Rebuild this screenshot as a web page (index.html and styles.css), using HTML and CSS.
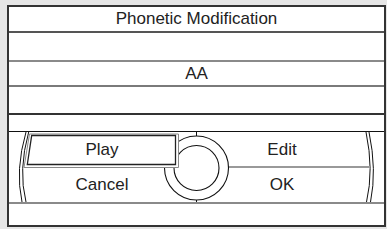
FILE: index.html
```html
<!DOCTYPE html>
<html>
<head>
<meta charset="utf-8">
<link rel="stylesheet" href="styles.css">
</head>
<body>
<div class="screen">
  <div class="row title">Phonetic Modification</div>
  <div class="row blank-a"></div>
  <div class="row value">AA</div>
  <div class="row blank-b"></div>
  <div class="row blank-c"></div>
  <div class="wheel">
    <svg class="wheel-art" width="375" height="70" viewBox="9 132 375 70">
      <path class="arc" d="M26 132 Q15 170 22 202"/>
      <path class="arc" d="M28.7 132 Q18 170 26 202"/>
      <path class="arc" d="M366 132 Q374 170 366.5 202"/>
      <path class="arc" d="M369 132 Q377 170 370.5 202"/>
      <line class="divider" x1="228" y1="167" x2="370" y2="167"/>
      <circle class="ring" cx="196.5" cy="168" r="32"/>
      <circle class="ring" cx="196.5" cy="168" r="22.5"/>
      <line class="tick" x1="196.5" y1="132" x2="196.5" y2="136"/>
      <line class="tick" x1="196.5" y1="200" x2="196.5" y2="202"/>
      <polygon class="sel-outer" points="24,167.5 29.5,134 178.5,134 178.5,167.5"/>
      <polygon class="sel-inner" points="27.3,164.5 31.7,135.5 175.5,135.5 175.5,164.5"/>
    </svg>
    <div class="opt">Play</div>
    <div class="opt">Edit</div>
    <div class="opt">Cancel</div>
    <div class="opt">OK</div>
  </div>
  <div class="row foot"></div>
</div>
</body>
</html>
```
FILE: styles.css
```css
html, body {
  margin: 0;
  padding: 0;
}
body {
  background: #e6e6e6;
  font-family: "Liberation Sans", Arial, sans-serif;
  font-size: 17px;
  color: #222;
  width: 387px;
  height: 229px;
  overflow: hidden;
}
.screen {
  margin: 5px 0 0 7px;
  width: 375px;
  border: 2px solid #333;
  background: #fff;
}
.row {
  display: flex;
  align-items: center;
  justify-content: center;
}
.title {
  height: 24px;
  border-bottom: 2px solid #555;
  padding-left: 0;
}
.blank-a {
  height: 27px;
  border-bottom: 2px solid #8a8a8a;
}
.value {
  height: 22px;
  border-bottom: 2px solid #7a7a7a;
  padding-top: 1px;
  box-sizing: content-box;
}
.blank-b {
  height: 26px;
  border-bottom: 2px solid #333;
}
.blank-c {
  height: 16px;
  border-bottom: 1px solid #111;
}
.wheel {
  position: relative;
  height: 70px;
  border-bottom: 2px solid #8a8a8a;
  display: grid;
  grid-template-columns: 186px 174px;
  grid-template-rows: 35px 35px;
}
.wheel-art {
  position: absolute;
  left: 0;
  top: 0;
  z-index: 0;
}
.arc {
  fill: none;
  stroke: #111;
  stroke-width: 1;
}
.divider {
  stroke: #999;
  stroke-width: 2;
}
.ring {
  fill: none;
  stroke: #111;
  stroke-width: 1.1;
}
.tick {
  stroke: #111;
  stroke-width: 1;
}
.sel-outer {
  fill: #fff;
  stroke: #888;
  stroke-width: 1;
}
.sel-inner {
  fill: none;
  stroke: #222;
  stroke-width: 1.3;
}
.opt {
  position: relative;
  z-index: 1;
  display: flex;
  align-items: center;
  justify-content: center;
}
.foot {
  height: 21px;
}
```
